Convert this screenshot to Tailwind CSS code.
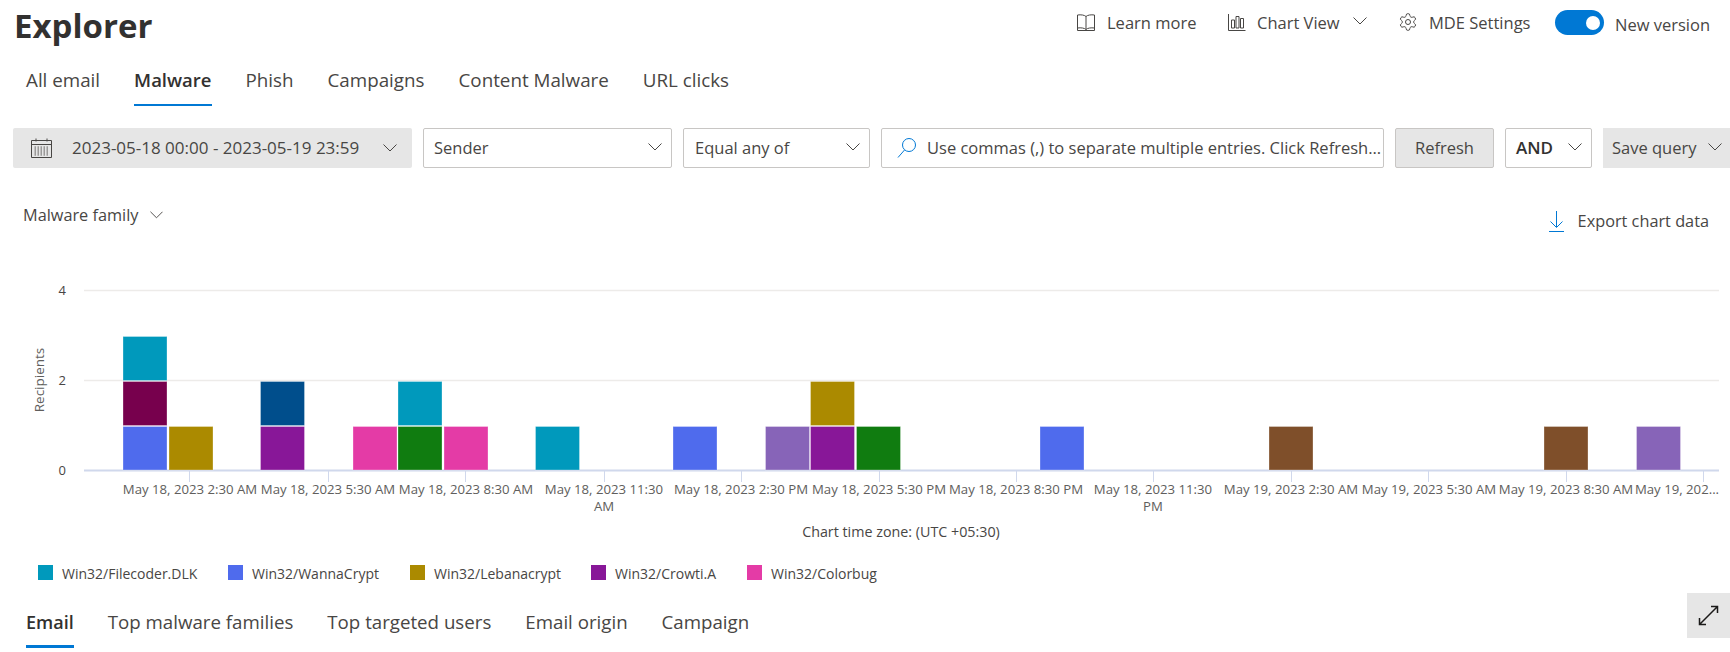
<!DOCTYPE html>
<html lang="en">
<head>
<meta charset="UTF-8">
<title>Explorer</title>
<script src="https://cdn.jsdelivr.net/npm/@tailwindcss/browser@4"></script>
</head>
<body class="w-[1730px] h-[652px] overflow-hidden bg-white text-[#323130] font-['Open_Sans',sans-serif]">

<!-- title + actions -->
<header class="flex justify-between h-[60px] pl-[14px]">
  <h1 class="text-[33px] leading-[52px] font-bold">Explorer</h1>
  <div class="flex items-start pr-[21px] pt-[10px] text-[16.500px] leading-[26px] text-[#484644] whitespace-nowrap">
    <svg class="w-[20px] h-[20px] mt-[3px] mr-[11px]" viewBox="0 0 20 20" fill="none" stroke="#484644" stroke-width="1"><path d="M10 3.500C8.500 2 5 1.500 1.500 2v13c3.500-.5 7 0 8.500 1.500C11.500 15 15 14.500 18.500 15V2C15 1.500 11.500 2 10 3.500zM10 3.500V16.500M1.500 15v2.500h17V15"/></svg>
    <span class="w-[88px] mr-[33px]">Learn more</span>
    <svg class="w-[18px] h-[20px] mt-[3px] mr-[11px]" viewBox="0 0 18 20" fill="none" stroke="#484644" stroke-width="1"><path d="M.5 1v16.500h17M3.500 7h3v8h-3zM8 3.500h3V15H8zM12.500 5.500h3V15h-3z"/></svg>
    <span class="w-[84px] mr-[12px]">Chart View</span>
    <svg class="w-[14px] h-[8px] mt-[7px] mr-[31px]" viewBox="0 0 14 8" fill="none" stroke="#484644"><path d="M.5.5 7 7 13.500.5"/></svg>
    <svg class="w-[20px] h-[20px] mt-[2px] mr-[11px]" viewBox="0 0 24 24" fill="none" stroke="#484644" stroke-width="1.200"><path d="M12.220 2h-.44a2 2 0 0 0-2 2v.18a2 2 0 0 1-1 1.730l-.43.25a2 2 0 0 1-2 0l-.15-.08a2 2 0 0 0-2.730.73l-.22.38a2 2 0 0 0 .73 2.730l.15.1a2 2 0 0 1 1 1.720v.51a2 2 0 0 1-1 1.740l-.15.09a2 2 0 0 0-.73 2.730l.22.38a2 2 0 0 0 2.730.73l.15-.08a2 2 0 0 1 2 0l.43.25a2 2 0 0 1 1 1.730V20a2 2 0 0 0 2 2h.44a2 2 0 0 0 2-2v-.18a2 2 0 0 1 1-1.730l.43-.25a2 2 0 0 1 2 0l.15.08a2 2 0 0 0 2.730-.73l.22-.39a2 2 0 0 0-.73-2.730l-.15-.08a2 2 0 0 1-1-1.740v-.5a2 2 0 0 1 1-1.740l.15-.09a2 2 0 0 0 .73-2.730l-.22-.38a2 2 0 0 0-2.730-.73l-.15.08a2 2 0 0 1-2 0l-.43-.25a2 2 0 0 1-1-1.730V4a2 2 0 0 0-2-2z"/><circle cx="12" cy="12" r="3"/></svg>
    <span class="w-[102px] mr-[24px]">MDE Settings</span>
    <span class="flex items-center justify-end w-[49px] h-[25px] rounded-full bg-[#0078d4] pr-[4px] mr-[11px]"><span class="w-[14px] h-[14px] rounded-full bg-white"></span></span>
    <span class="w-[94px] mt-[2px]">New version</span>
  </div>
</header>

<!-- main tabs -->
<nav class="flex gap-[34px] h-[46px] pl-[26px] text-[18.800px] text-[#484644]">
  <a class="pt-[7px] leading-[26px]">All email</a>
  <a class="pt-[7px] leading-[26px] text-[18.500px] font-semibold text-[#323130] border-b-[2px] border-[#0078d4]">Malware</a>
  <a class="pt-[7px] leading-[26px]">Phish</a>
  <a class="pt-[7px] leading-[26px]">Campaigns</a>
  <a class="pt-[7px] leading-[26px]">Content Malware</a>
  <a class="pt-[7px] leading-[26px]">URL clicks</a>
</nav>

<!-- filters -->
<div class="flex gap-[11px] h-[40px] mt-[22px] pl-[13px] text-[16.500px] text-[#484644] w-[1800px]">
  <div class="flex items-center w-[399px] bg-[#e6e6e6] rounded-[2px] pl-[18px]">
    <svg class="w-[21px] h-[20px] mr-[20px]" viewBox="0 0 21 20" fill="none" stroke="#484644"><path d="M.5 2.500h20v17H.5zM.5 6.500h20M5 .5v3M16 .5v3"/><path stroke-dasharray="1.500 1.500" stroke-width="9.500" stroke="#9b9a99" d="M3.500 13h14"/></svg>
    <span class="w-[289px] whitespace-nowrap text-[17px]">2023-05-18 00:00 - 2023-05-19 23:59</span>
    <svg class="w-[14px] h-[8px] ml-[22px]" viewBox="0 0 14 8" fill="none" stroke="#484644"><path d="M.5.5 7 7 13.500.5"/></svg>
  </div>
  <div class="flex items-center justify-between w-[249px] border border-[#c8c6c4] rounded-[2px] pl-[10px] pr-[9px]">
    <span>Sender</span>
    <svg class="w-[14px] h-[8px] mb-[3px]" viewBox="0 0 14 8" fill="none" stroke="#484644"><path d="M.5.5 7 7 13.500.5"/></svg>
  </div>
  <div class="flex items-center justify-between w-[187px] border border-[#c8c6c4] rounded-[2px] pl-[11px] pr-[9px]">
    <span>Equal any of</span>
    <svg class="w-[14px] h-[8px] mb-[3px]" viewBox="0 0 14 8" fill="none" stroke="#484644"><path d="M.5.5 7 7 13.500.5"/></svg>
  </div>
  <div class="flex items-center w-[503px] border border-[#c8c6c4] rounded-[2px] pl-[15px] overflow-hidden">
    <svg class="w-[19px] h-[20px] mr-[11px] shrink-0" viewBox="0 0 19 20" fill="none" stroke="#0078d4"><circle cx="12" cy="7" r="6.500"/><path d="M7.500 12 1 19.500"/></svg>
    <span class="whitespace-nowrap">Use commas (,) to separate multiple entries. Click Refresh...</span>
  </div>
  <button class="w-[99px] bg-[#e6e6e6] border border-[#c8c6c4] rounded-[2px]">Refresh</button>
  <div class="flex items-center justify-between w-[87px] border border-[#c8c6c4] rounded-[2px] pl-[10px] pr-[9px]">
    <span class="text-[17px] font-semibold text-[#323130]">AND</span>
    <svg class="w-[14px] h-[8px] mb-[3px]" viewBox="0 0 14 8" fill="none" stroke="#484644"><path d="M.5.5 7 7 13.500.5"/></svg>
  </div>
  <div class="flex items-center w-[127px] bg-[#e6e6e6] pl-[9px] whitespace-nowrap">
    <span>Save query</span>
    <svg class="w-[14px] h-[8px] ml-[11px] mb-[3px]" viewBox="0 0 14 8" fill="none" stroke="#484644"><path d="M.5.5 7 7 13.500.5"/></svg>
  </div>
</div>

<!-- chart toolbar -->
<div class="flex justify-between h-[72px] pl-[23px] pr-[21px] text-[16.300px] text-[#484644]">
  <div class="flex items-center h-[22px] mt-[36px]">
    <span>Malware family</span>
    <svg class="w-[13px] h-[8px] ml-[12px]" viewBox="0 0 14 8" fill="none" stroke="#484644"><path d="M.5.5 7 7 13.500.5"/></svg>
  </div>
  <div class="flex items-center h-[22px] mt-[42px]">
    <svg class="w-[15px] h-[21px] mr-[14px]" viewBox="0 0 15 21" fill="none" stroke="#0078d4"><path d="M7.500 0v16M1.500 10.500l6 6 6-6M0 20.500h15"/></svg>
    <span>Export chart data</span>
  </div>
</div>

<!-- stacked bars -->
<svg class="block w-[1730px] h-[310px] font-['Open_Sans',sans-serif]" viewBox="0 240 1730 310">
  <g stroke="#edebe9" stroke-width="1.500">
    <path d="M84 290.500H1719M84 380.500H1719"/>
  </g>
  <path d="M84 470.500H1719" stroke="#d0d8ec" stroke-width="2"/>
  <path stroke="#d0d8ec" d="M189.500 471v11M328.500 471v11M465.500 471v11M604.500 471v11M741.500 471v11M879.500 471v11M1016.500 471v11M1153.500 471v11M1291.500 471v11M1428.500 471v11M1566.500 471v11M1703.500 471v11"/>

  <g fill="#484644" font-size="13" text-anchor="end">
    <text x="66" y="295">4</text>
    <text x="66" y="385">2</text>
    <text x="66" y="475">0</text>
  </g>
  <text transform="translate(44 380) rotate(-90)" text-anchor="middle" font-size="13.500" fill="#605e5c">Recipients</text>

  <g stroke="#ffffff" stroke-opacity="0.3">
    <rect x="123" y="336.500" width="44" height="44" fill="#0099bc"/>
    <rect x="123" y="381.500" width="44" height="44" fill="#77004d"/>
    <rect x="123" y="426.500" width="44" height="43.500" fill="#4f6bed"/>
    <rect x="169" y="426.500" width="44" height="43.500" fill="#ab8a00"/>
    <rect x="260.500" y="381.500" width="44" height="44" fill="#004e8c"/>
    <rect x="260.500" y="426.500" width="44" height="43.500" fill="#881798"/>
    <rect x="353" y="426.500" width="44" height="43.500" fill="#e43ba6"/>
    <rect x="398" y="381.500" width="44" height="44" fill="#0099bc"/>
    <rect x="398" y="426.500" width="44" height="43.500" fill="#107c10"/>
    <rect x="444" y="426.500" width="44" height="43.500" fill="#e43ba6"/>
    <rect x="535.500" y="426.500" width="44" height="43.500" fill="#0099bc"/>
    <rect x="673" y="426.500" width="44" height="43.500" fill="#4f6bed"/>
    <rect x="765.500" y="426.500" width="44" height="43.500" fill="#8764b8"/>
    <rect x="810.500" y="381.500" width="44" height="44" fill="#ab8a00"/>
    <rect x="810.500" y="426.500" width="44" height="43.500" fill="#881798"/>
    <rect x="856.500" y="426.500" width="44" height="43.500" fill="#107c10"/>
    <rect x="1040" y="426.500" width="44" height="43.500" fill="#4f6bed"/>
    <rect x="1269" y="426.500" width="44" height="43.500" fill="#7f4f2a"/>
    <rect x="1544" y="426.500" width="44" height="43.500" fill="#7f4f2a"/>
    <rect x="1636.500" y="426.500" width="44" height="43.500" fill="#8764b8"/>
  </g>

  <g fill="#605e5c" font-size="13.200" text-anchor="middle">
    <text x="190" y="494">May 18, 2023 2:30 AM</text>
    <text x="328" y="494">May 18, 2023 5:30 AM</text>
    <text x="466" y="494">May 18, 2023 8:30 AM</text>
    <text x="604" y="494">May 18, 2023 11:30</text>
    <text x="604" y="511">AM</text>
    <text x="741" y="494">May 18, 2023 2:30 PM</text>
    <text x="879" y="494">May 18, 2023 5:30 PM</text>
    <text x="1016" y="494">May 18, 2023 8:30 PM</text>
    <text x="1153" y="494">May 18, 2023 11:30</text>
    <text x="1153" y="511">PM</text>
    <text x="1291" y="494">May 19, 2023 2:30 AM</text>
    <text x="1429" y="494">May 19, 2023 5:30 AM</text>
    <text x="1566" y="494">May 19, 2023 8:30 AM</text>
    <text x="1677" y="494">May 19, 202...</text>
  </g>
  <text x="901" y="537" font-size="14.300" fill="#484644" text-anchor="middle">Chart time zone: (UTC +05:30)</text>
</svg>

<!-- legend -->
<div class="flex h-[15px] mt-[15px] pl-[38px] text-[14px] leading-[18px] text-[#484644] whitespace-nowrap">
  <span class="w-[15px] h-[15px] bg-[#0099bc] mr-[9px]"></span><span class="w-[166px]">Win32/Filecoder.DLK</span>
  <span class="w-[15px] h-[15px] bg-[#4f6bed] mr-[9px]"></span><span class="w-[158px]">Win32/WannaCrypt</span>
  <span class="w-[15px] h-[15px] bg-[#ab8a00] mr-[9px]"></span><span class="w-[157px]">Win32/Lebanacrypt</span>
  <span class="w-[15px] h-[15px] bg-[#881798] mr-[9px]"></span><span class="w-[132px]">Win32/Crowti.A</span>
  <span class="w-[15px] h-[15px] bg-[#e43ba6] mr-[9px]"></span><span>Win32/Colorbug</span>
</div>

<!-- bottom tabs -->
<div class="flex justify-between items-start mt-[13px]">
  <nav class="flex gap-[34px] h-[40px] pl-[26px] pt-[13px] text-[18.700px] text-[#484644]">
    <a class="h-[42px] pt-[3px] leading-[26px] text-[18px] font-semibold text-[#323130] border-b-[3px] border-[#0078d4]">Email</a>
    <a class="pt-[3px] leading-[26px]">Top malware families</a>
    <a class="pt-[3px] leading-[26px]">Top targeted users</a>
    <a class="pt-[3px] leading-[26px]">Email origin</a>
    <a class="pt-[3px] leading-[26px]">Campaign</a>
  </nav>
  <button class="flex items-center justify-center w-[43px] h-[45px] bg-[#e6e6e6]">
    <svg class="w-[21px] h-[21px]" viewBox="0 0 21 21" fill="none" stroke="#1b1a19" stroke-width="1.500"><path d="M1.500 19.500 19.500 1.500M13 1.500h6.500V8M1.500 13v6.500H8"/></svg>
  </button>
</div>

</body>
</html>
